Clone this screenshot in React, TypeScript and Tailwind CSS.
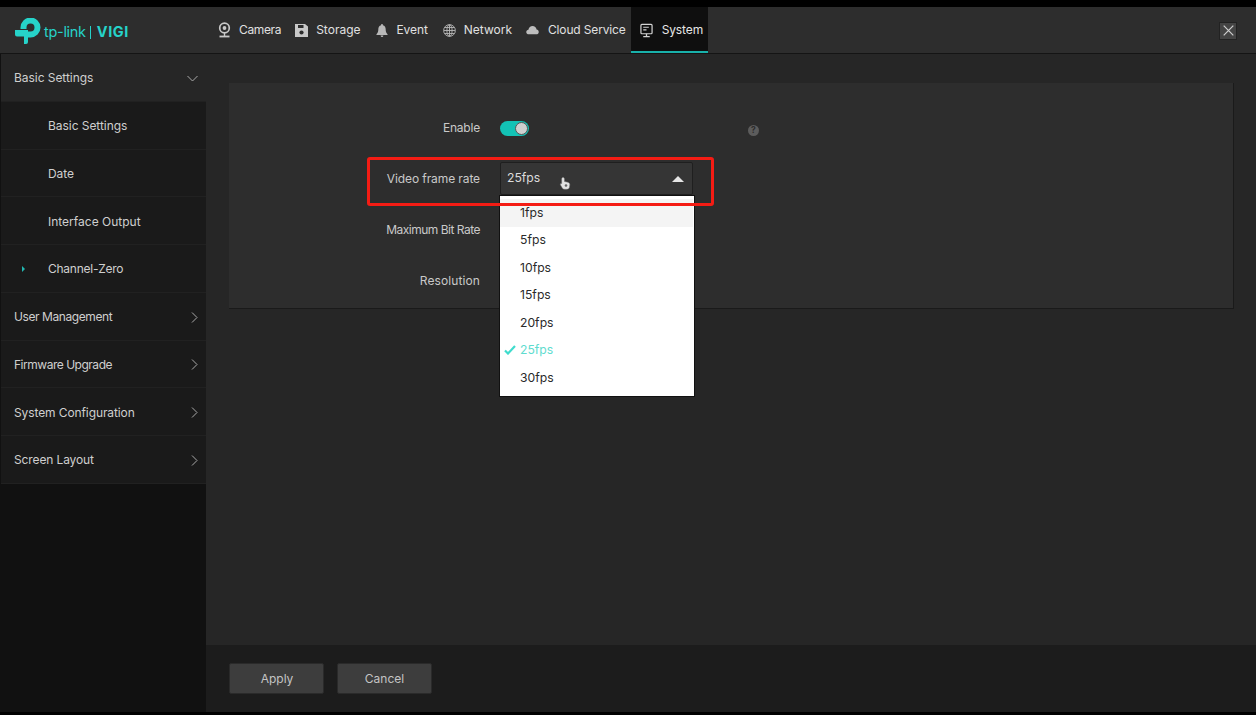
import React from "react";

const font = { fontFamily: "Inter, 'Liberation Sans', sans-serif" };

function CameraIcon() {
  return (
    <svg width="13" height="16" viewBox="0 0 13 16" fill="none">
      <circle cx="6.500" cy="6" r="4.800" stroke="#c8c8c8" strokeWidth="1.700" />
      <circle cx="6.500" cy="6" r="1.900" fill="#c8c8c8" />
      <path d="M1.500 14.500h10" stroke="#c8c8c8" strokeWidth="1.800" />
      <path d="M6.500 11v3" stroke="#c8c8c8" strokeWidth="1.400" />
    </svg>
  );
}
function StorageIcon() {
  return (
    <svg width="13" height="13" viewBox="0 0 13 13">
      <path d="M0 0h10l3 2.500V13H0z" fill="#c8c8c8" />
      <rect x="3" y="1" width="5.500" height="3" fill="#2d2d2d" />
      <circle cx="6.500" cy="8.500" r="2.100" fill="#2d2d2d" />
    </svg>
  );
}
function BellIcon() {
  return (
    <svg width="12" height="15" viewBox="0 0 13 15">
      <path d="M6.500 0.500c.7 0 1 .5 1 1.200C9.600 2.300 10.500 4 10.500 6.500c0 2.500.7 3.600 2 5v.8H.5v-.8c1.300-1.400 2-2.500 2-5C2.500 4 3.400 2.300 5.500 1.700c0-.7.3-1.200 1-1.200z" fill="#b8b8b8" />
      <path d="M5 13h3c0 1-.6 1.600-1.500 1.600S5 14 5 13z" fill="#b8b8b8" />
    </svg>
  );
}
function GlobeIcon() {
  return (
    <svg width="13" height="13" viewBox="0 0 14 14" fill="none" stroke="#b4b4b4" strokeWidth="1">
      <circle cx="7" cy="7" r="6.300" />
      <ellipse cx="7" cy="7" rx="2.800" ry="6.300" />
      <path d="M7 1v12M1 7h12M2 3.800h10M2 10.200h10" />
    </svg>
  );
}
function CloudIcon() {
  return (
    <svg width="14" height="10" viewBox="0 0 15 11">
      <path d="M3.500 10.500C1.500 10.500.3 9.300.3 7.800c0-1.500 1-2.500 2.500-2.700C3.200 2.800 5.200 1 7.600 1c2.300 0 4.200 1.700 4.600 3.900 1.500.3 2.500 1.400 2.500 2.900 0 1.500-1.200 2.700-3 2.700z" fill="#bdbdbd" />
    </svg>
  );
}
function SystemIcon() {
  return (
    <svg width="13" height="15" viewBox="0 0 14 15" fill="none">
      <rect x="1" y="1" width="12" height="10" rx="1" stroke="#d4d4d4" strokeWidth="1.300" />
      <path d="M3.500 4h6M3.500 6.800h3.500" stroke="#d4d4d4" strokeWidth="1.200" />
      <path d="M7 11v2.500M3.500 14h7" stroke="#d4d4d4" strokeWidth="1.400" />
    </svg>
  );
}
function Logo() {
  return (
    <svg width="28" height="26" viewBox="0 0 28 26" fill="none">
      <path d="M8.500 11V9.500a7 7 0 1 1 7 7H13" stroke="#26d3c9" strokeWidth="6" />
      <path d="M0 12h13v12a2 2 0 0 1-2 2H9V18.500H2a2 2 0 0 1-2-2z" fill="#26d3c9" />
    </svg>
  );
}
function Chevron({ down }: { down?: boolean }) {
  return down ? (
    <svg width="11" height="7" viewBox="0 0 11 7" fill="none" stroke="#a8a8a8" strokeWidth="1">
      <path d="M.5 1l5 5 5-5" />
    </svg>
  ) : (
    <svg width="7" height="11" viewBox="0 0 7 11" fill="none" stroke="#a8a8a8" strokeWidth="1">
      <path d="M1 .5l5 5-5 5" />
    </svg>
  );
}

const tabs: { label: string; icon: React.ReactNode; cls: string }[] = [
  { label: "Camera", icon: <CameraIcon />, cls: "mr-[14px] gap-[8px] tracking-[-0.35px]" },
  { label: "Storage", icon: <StorageIcon />, cls: "mr-[15px] gap-[8px] tracking-[0px]" },
  { label: "Event", icon: <BellIcon />, cls: "mr-[15px] gap-[8px] tracking-[-0.1px]" },
  { label: "Network", icon: <GlobeIcon />, cls: "mr-[14px] gap-[8px] tracking-[0px]" },
  { label: "Cloud Service", icon: <CloudIcon />, cls: "mr-[5px] gap-[9px] tracking-[-0.15px]" },
];

const side: { label: string; level: 0 | 1; open?: boolean; active?: boolean; track: string }[] = [
  { label: "Basic Settings", level: 0, open: true, track: "tracking-[-0.05px]" },
  { label: "Basic Settings", level: 1, track: "tracking-[-0.05px]" },
  { label: "Date", level: 1, track: "tracking-[-0.05px]" },
  { label: "Interface Output", level: 1, track: "tracking-[0px]" },
  { label: "Channel-Zero", level: 1, active: true, track: "tracking-[-0.25px]" },
  { label: "User Management", level: 0, track: "tracking-[-0.42px]" },
  { label: "Firmware Upgrade", level: 0, track: "tracking-[-0.48px]" },
  { label: "System Configuration", level: 0, track: "tracking-[-0.1px]" },
  { label: "Screen Layout", level: 0, track: "tracking-[-0.12px]" },
];

const options = ["1fps", "5fps", "10fps", "15fps", "20fps", "25fps", "30fps"];

function Row({ label, children, h, track }: { label: string; children?: React.ReactNode; h: string; track: string }) {
  return (
    <div className={`flex items-center ${h}`}>
      <div className={`w-[251px] shrink-0 text-right text-[12px] text-[#c9c9c9] ${track}`}>{label}</div>
      <div className="ml-[20px] relative">{children}</div>
    </div>
  );
}

export default function App() {
  return (
    <div style={font} className="w-[1256px] h-[715px] overflow-hidden bg-black flex flex-col pt-[7px] pb-[3px] relative">
      <header className="h-[47px] shrink-0 bg-[#2d2d2d] border-b border-[#141414] flex items-stretch pl-[15px] pr-[19px]">
        <div className="flex items-center w-[203px] shrink-0 pt-[1px]">
          <Logo />
          <span className="ml-[1px] mt-[4px] text-[14.500px] leading-none text-[#26d3c9] tracking-[-0.3px]">tp-link</span>
          <span className="ml-[4px] mr-[6px] mt-[3px] w-px h-[13px] bg-[#26d3c9]" />
          <span className="mt-[3px] text-[14.500px] font-bold leading-none text-[#26d3c9] tracking-[0.6px]">VIGI</span>
        </div>
        <nav className="flex items-stretch h-[46px]">
          {tabs.map((t) => (
            <div key={t.label} className={`flex items-center ${t.cls} text-[12px] text-[#e0e0e0]`}>
              <span className="flex w-[13px] justify-center">{t.icon}</span>
              <span>{t.label}</span>
            </div>
          ))}
          <div className="w-[77px] pl-[9px] flex items-center gap-[9px] bg-[#0f0f0f] relative text-[12px] tracking-[-0.1px] text-[#e6e6e6]">
            <SystemIcon />
            <span>System</span>
            <span className="absolute left-0 right-0 bottom-0 h-[2px] bg-[#19b1aa]" />
          </div>
        </nav>
        <div className="ml-auto self-center mt-[1px] w-[18px] h-[18px] bg-[#444] border border-[#222] flex items-center justify-center">
          <svg width="11" height="11" viewBox="0 0 11 11" stroke="#cfcfcf" strokeWidth="1.200">
            <path d="M.7.700l9.600 9.600M10.300.700L.7 10.300" />
          </svg>
        </div>
      </header>

      <div className="flex-1 flex min-h-0">
        <aside className="w-[206px] shrink-0 bg-[#111111] pl-px">
          {side.map((s, i) => (
            <div
              key={i}
              className={`h-[47.750px] flex items-center pt-[2px] border-b border-[#212121] text-[12px] ${s.track} text-[#cfcfcf] ${
                s.open ? "bg-[#262626]" : "bg-[#1a1a1a]"
              } ${s.level === 0 ? "pl-[13px] pr-[8px] justify-between" : "pl-[21px]"}`}
            >
              {s.level === 1 && (
                <span className="w-[26px] shrink-0 flex items-center">
                  {s.active && <span className="block w-0 h-0 border-y-[3px] border-y-transparent border-l-[3.500px] border-l-[#22b8b2]" />}
                </span>
              )}
              <span>{s.label}</span>
              {s.level === 0 && <Chevron down={s.open} />}
            </div>
          ))}
        </aside>

        <main className="flex-1 flex flex-col bg-[#262626] min-w-0">
          <div className="flex-1 pt-[29px] pl-[23px] pr-[22px]">
            <section className="relative h-[226px] bg-[#2d2d2d] border-b border-r border-[#1a1a1a] pt-[20px]">
              <Row label="Enable" h="h-[50px]" track="tracking-[-0.2px]">
                <div className="w-[29px] h-[15px] rounded-full bg-[#13c2b5] relative">
                  <span className="absolute right-[1px] top-[1px] w-[13px] h-[13px] rounded-full bg-[#cfcfcf] border border-[#555]" />
                </div>
              </Row>
              <Row label="Video frame rate" h="h-[51px]" track="tracking-[-0.1px]">
                <div className="w-[193px] h-[33px] bg-[#353535] border border-[#1f1f1f] rounded-[2px] flex items-center justify-between pl-[6px] pr-[8px] text-[12.200px] text-[#dcdcdc]">
                  <span>25fps</span>
                  <span className="w-0 h-0 border-x-[6px] border-x-transparent border-b-[6px] border-b-[#e6e6e6]" />
                </div>
                <svg className="absolute left-[59px] top-[14px]" width="12" height="14" viewBox="0 0 12 14">
                  <path d="M4 1.500c1 0 1.400.7 1.400 1.500v2.500l3.500.8c1.300.4 2 1.300 1.900 2.500l-.4 2.500c-.2 1.300-1.200 2-2.500 2H5.500c-1 0-1.700-.4-2.200-1.200L1.500 9c-.5-1 .3-1.700 1.200-1.300V3c0-.8.400-1.500 1.300-1.500z" fill="#e4e4e4" stroke="#777" strokeWidth="0.500" />
                  <circle cx="7" cy="9.500" r="1.300" fill="#666" />
                </svg>
                <div className="absolute z-10 left-[-1px] top-[33px] w-[196px] h-[202px] bg-white border border-[#111] pt-[3px]">
                  {options.map((o, i) => (
                    <div
                      key={o}
                      className={`relative h-[27.500px] flex items-center pl-[20px] text-[12.200px] ${
                        o === "25fps" ? "text-[#5fdccf]" : "text-[#2a2a2a]"
                      } ${i === 0 ? "bg-[#f4f4f4] mr-px" : ""}`}
                    >
                      {o === "25fps" && (
                        <svg className="absolute left-[4px] top-[8px]" width="12" height="10" viewBox="0 0 12 10" fill="none" stroke="#3fdccd" strokeWidth="2.200">
                          <path d="M1 5.500l3 3L11 1" />
                        </svg>
                      )}
                      {o}
                    </div>
                  ))}
                </div>
              </Row>
              <Row label="Maximum Bit Rate" h="h-[51px]" track="tracking-[-0.5px]" />
              <Row label="Resolution" h="h-[51px]" track="tracking-[0.1px]" />
              <div className="absolute left-[519px] top-[42px] w-[11px] h-[11px] rounded-full bg-[#5c5c5c] flex items-center justify-center text-[8.500px] font-bold leading-none text-[#2d2d2d]">
                ?
              </div>
            </section>
          </div>
          <footer className="h-[67px] shrink-0 bg-[#1c1c1c] flex items-center gap-[13px] pl-[23px]">
            <button className="w-[95px] h-[31px] pt-[1px] pl-[1px] bg-[#3d3d3d] border border-[#2a2a2a] rounded-[2px] text-[12px] text-[#c4c4c4]">Apply</button>
            <button className="w-[95px] h-[31px] pt-[1px] bg-[#3d3d3d] border border-[#2a2a2a] rounded-[2px] text-[12px] text-[#c4c4c4]">Cancel</button>
          </footer>
        </main>
      </div>

      <div className="absolute left-[367px] top-[157px] w-[347px] h-[49px] border-[3px] border-[#f41c14] rounded-[3px] z-20 pointer-events-none" />
    </div>
  );
}
